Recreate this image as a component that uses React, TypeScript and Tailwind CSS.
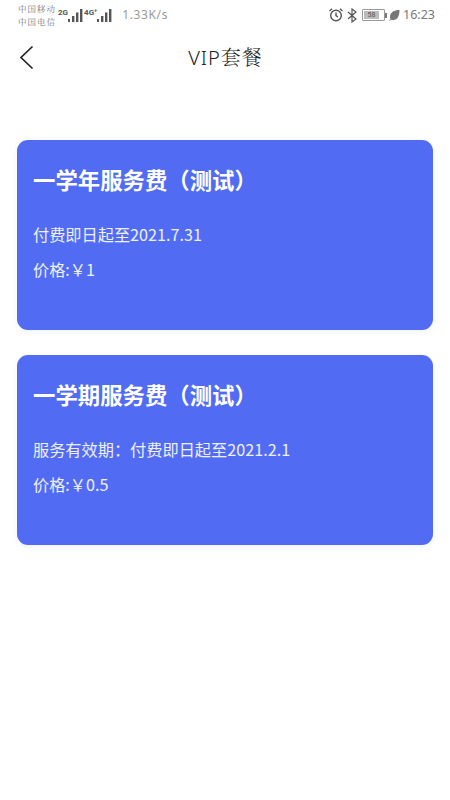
const plans = [
  { title: "一学年服务费（测试）", desc: "付费即日起至2021.7.31", price: "价格:￥1" },
  { title: "一学期服务费（测试）", desc: "服务有效期：付费即日起至2021.2.1", price: "价格:￥0.5" },
];

const Bars = () => (
  <svg width="15" height="15" viewBox="0 0 15 15" fill="#555">
    <rect x="0" y="11" width="2" height="3" />
    <rect x="4" y="8" width="2.400" height="6" />
    <rect x="8" y="4.500" width="2.400" height="9.500" />
    <rect x="12" y="1" width="2.400" height="13" />
  </svg>
);

const StatusBar = () => (
  <div className="flex h-[30px] items-center justify-between pl-[18px] pr-[15px] text-[#777]">
    <div className="flex items-center">
      <div className="flex flex-col text-[8.500px] leading-[13px] tracking-[1px] font-['Noto_Serif_CJK_SC','Noto_Sans_CJK_SC',sans-serif]">
        <span>中国移动</span>
        <span>中国电信</span>
      </div>
      <span className="ml-[2px] mb-1 text-[8px] font-bold text-[#555] font-['Roboto',sans-serif]">2G</span>
      <Bars />
      <span className="ml-[1px] mb-1 text-[8px] font-bold text-[#555] font-['Roboto',sans-serif]">4G⁺</span>
      <Bars />
      <span className="ml-[10px] text-[12px] tracking-[0.6px] text-[#999] font-['Noto_Sans',sans-serif]">1.33K/s</span>
    </div>
    <div className="flex items-center">
      <svg width="16" height="16" viewBox="0 0 16 16" fill="none" stroke="#555" strokeWidth="1.4">
        <circle cx="8" cy="8.500" r="5.300" />
        <path d="M8 5.500v3.200l2 1.300M1.500 4 4 1.800M14.500 4 12 1.800" />
      </svg>
      <svg className="ml-[3px]" width="10" height="15" viewBox="0 0 10 15" fill="none" stroke="#555" strokeWidth="1.2">
        <path d="M1 4l8 7-4 3V1l4 3-8 7" />
      </svg>
      <div className="ml-[5px] flex items-center">
        <div className="h-[12px] w-[23px] rounded-[1px] border border-[#999] p-[1px]">
          <div className="flex h-full w-[15px] items-center justify-center bg-[#bbb] text-[7px] leading-none text-[#555] font-['Roboto',sans-serif]">58</div>
        </div>
        <div className="h-[5px] w-[2px] bg-[#777]" />
      </div>
      <svg className="ml-[2px]" width="11" height="12" viewBox="0 0 11 12" fill="#777">
        <path d="M10.500 1C5 1 1 3.500 1 8c0 1 .3 1.700.6 2.200L0 11.500l.5.500 1.700-1.300C3 11 4 11.200 5 11c4-.6 5.500-5 5.500-10z" />
      </svg>
      <span className="ml-[3px] text-[12.500px] text-[#777] font-['Noto_Sans',sans-serif]">16:23</span>
    </div>
  </div>
);

export default function App() {
  return (
    <div className="min-h-[800px] w-[450px] bg-white font-['Noto_Sans_CJK_SC',sans-serif]">
      <StatusBar />
      <div className="relative flex h-[54px] items-center justify-center">
        <svg className="absolute left-[19px] top-[15px]" width="15" height="25" viewBox="0 0 15 25" fill="none" stroke="#222" strokeWidth="1.700">
          <path d="M13.500 1.500 2 12.500l11.500 11" />
        </svg>
        <span className="ml-[1px] text-[20px] font-light tracking-[1px] text-[#222] font-['Noto_Sans',serif]">
          VIP<span className="font-['Noto_Serif_CJK_SC','Noto_Sans_CJK_SC',serif]">套餐</span>
        </span>
      </div>
      <div className="flex flex-col gap-[25px] px-[17px] pt-[56px]">
        {plans.map((p) => (
          <div key={p.title} className="h-[190px] rounded-[11px] bg-[#516bf2] px-[16px] pt-[23px] text-white shadow-[0_2px_6px_rgba(82,108,245,0.08)]">
            <div className="text-[22.400px] font-bold leading-[33px]">{p.title}</div>
            <div className="mt-[26px] text-[16.200px] leading-[24px] text-white/90">{p.desc}</div>
            <div className="mt-[11px] text-[16.200px] leading-[24px] text-white/90">{p.price}</div>
          </div>
        ))}
      </div>
    </div>
  );
}
